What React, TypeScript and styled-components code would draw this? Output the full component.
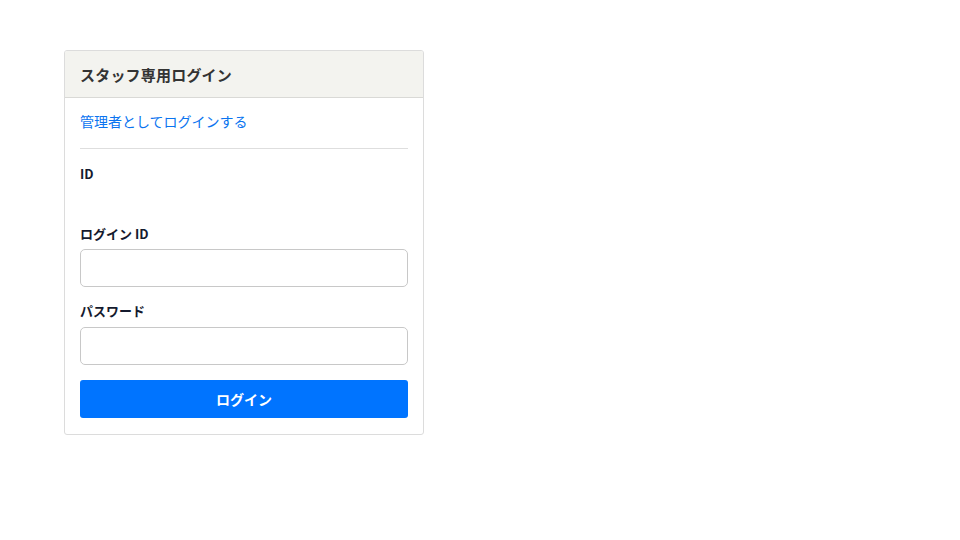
import React from "react";
import styled, { createGlobalStyle } from "styled-components";

const GlobalStyle = createGlobalStyle`
  body {
    margin: 0;
    background: #ffffff;
    font-family: "Noto Sans CJK JP", "Noto Sans", sans-serif;
  }
`;

const Page = styled.div`
  padding: 50px 64px;
`;

const Card = styled.div`
  width: 360px;
  box-sizing: border-box;
  border: 1px solid #dcdcdc;
  border-radius: 3px;
  background: #fff;
  overflow: hidden;
`;

const CardHeader = styled.div`
  background: #f3f3ef;
  border-bottom: 1px solid #d9d9d6;
  padding: 0 15px;
  height: 46px;
  display: flex;
  align-items: center;
`;

const Title = styled.h1`
  margin: 0;
  font-size: 15px;
  font-weight: 700;
  letter-spacing: 0.2px;
  color: #333333;
`;

const CardBody = styled.div`
  padding: 13px 15px 16px;
  display: flex;
  flex-direction: column;
`;

const AdminLink = styled.a`
  font-size: 14px;
  line-height: 20px;
  color: #0a74f0;
  text-decoration: none;
  cursor: pointer;
`;

const Divider = styled.hr`
  border: none;
  border-top: 1px solid #dedede;
  margin: 17px 0 16px;
`;

const Field = styled.div<{ $gap?: number; $inner?: number }>`
  display: flex;
  flex-direction: column;
  gap: ${({ $inner }) => $inner ?? 6}px;
  margin-bottom: ${({ $gap }) => $gap ?? 15}px;
`;

const Label = styled.label`
  font-size: 13px;
  line-height: 18px;
  font-weight: 700;
  color: #141a2e;
`;

const Input = styled.input`
  box-sizing: border-box;
  width: 100%;
  height: 38px;
  border: 1px solid #c8c8c8;
  border-radius: 5px;
  padding: 0 10px;
  font-size: 14px;
  outline: none;
`;

const SubmitButton = styled.button`
  height: 38px;
  border: none;
  border-radius: 3px;
  background: #0074ff;
  color: #fff;
  font-family: inherit;
  font-size: 14px;
  font-weight: 700;
  cursor: pointer;
`;

export default function App() {
  return (
    <>
      <GlobalStyle />
      <Page>
        <Card>
          <CardHeader>
            <Title>スタッフ専用ログイン</Title>
          </CardHeader>
          <CardBody>
            <AdminLink>管理者としてログインする</AdminLink>
            <Divider />
            <Field $gap={42}>
              <Label>ID</Label>
            </Field>
            <Field>
              <Label>ログイン ID</Label>
              <Input type="text" />
            </Field>
            <Field $inner={7}>
              <Label>パスワード</Label>
              <Input type="password" />
            </Field>
            <SubmitButton>ログイン</SubmitButton>
          </CardBody>
        </Card>
      </Page>
    </>
  );
}
